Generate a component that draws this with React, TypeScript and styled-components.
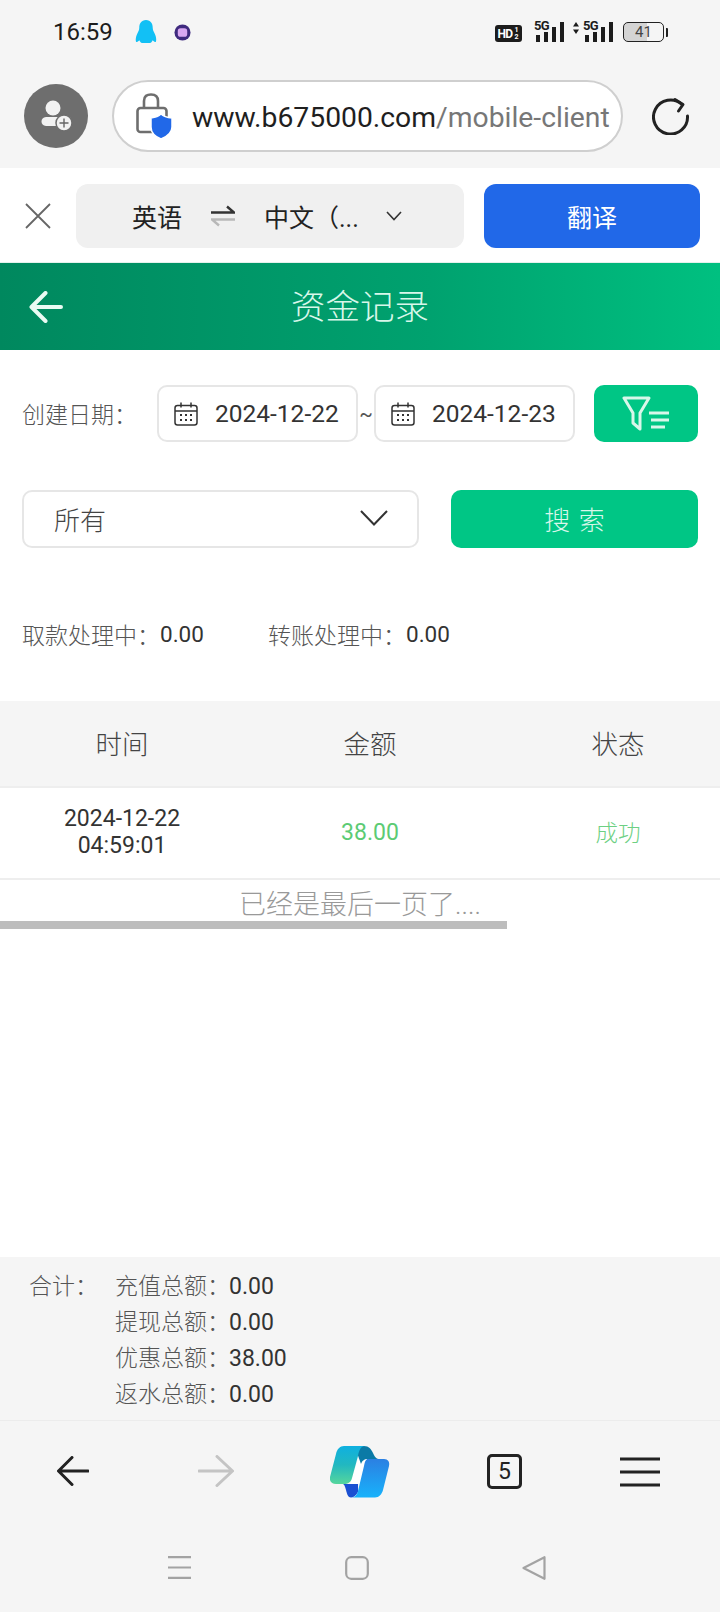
import React from "react";
import styled, { createGlobalStyle } from "styled-components";

const GlobalStyle = createGlobalStyle`
  html, body {
    margin: 0;
    padding: 0;
    background: #fff;
  }
  * {
    box-sizing: border-box;
  }
`;

const Page = styled.div`
  width: 720px;
  height: 1612px;
  display: flex;
  flex-direction: column;
  overflow: hidden;
  position: relative;
  background: #fff;
  color: #333;
  font-family: Roboto, "Noto Sans CJK SC", sans-serif;
`;

const BrowserTop = styled.div`
  height: 168px;
  background: #f5f5f5;
  flex: none;
`;

const StatusBar = styled.div`
  height: 64px;
  padding: 0 52px 0 53px;
  display: flex;
  align-items: center;
  color: #1c1c1c;
`;

const Clock = styled.span`
  font-size: 24px;
  width: 65px;
`;

const StatusLeft = styled.div`
  display: flex;
  align-items: center;
  gap: 17px;
  flex: 1;
`;

const StatusRight = styled.div`
  height: 20px;
  display: flex;
  align-items: flex-end;
`;

const HdBadge = styled.span`
  width: 27px;
  height: 17px;
  border-radius: 3px;
  background: #1c1c1c;
  color: #fff;
  font-size: 12px;
  font-weight: 700;
  display: flex;
  align-items: center;
  justify-content: center;
  letter-spacing: -0.6px;
  margin-right: 14px;
`;

const HdFraction = styled.span`
  font-size: 7px;
  line-height: 7px;
  width: 6px;
  margin-left: 1px;
  letter-spacing: 0;
  text-align: center;
`;

const Signal = styled.div<{ $gap: number }>`
  position: relative;
  width: 28px;
  height: 20px;
  margin-right: ${(p) => p.$gap}px;
  display: flex;
  align-items: flex-end;
  gap: 4px;
`;

const SignalLabel = styled.span`
  position: absolute;
  left: -2px;
  top: -2px;
  font-size: 13px;
  font-weight: 700;
  line-height: 12px;
  letter-spacing: -0.6px;
`;

const SignalBar = styled.span<{ $h: number }>`
  width: 4px;
  height: ${(p) => p.$h}px;
  background: #1c1c1c;
`;

const SignalArrows = styled.span`
  width: 6px;
  height: 20px;
  margin-right: 6px;
  display: flex;
`;

const Battery = styled.div`
  width: 41px;
  height: 20px;
  border: 1.5px solid #222;
  border-radius: 5px;
  display: flex;
  align-items: center;
  justify-content: center;
  font-size: 15px;
  color: #444;
  overflow: hidden;
  background: linear-gradient(90deg, #d4d4d4 60%, transparent 60%);
`;

const BatteryTip = styled.span`
  width: 2px;
  height: 9px;
  margin: 0 0 5px 2px;
  background: #222;
  border-radius: 0 1px 1px 0;
`;

const AddressRow = styled.div`
  display: flex;
  align-items: center;
  padding: 16px 0 0 24px;
`;

const Avatar = styled.div`
  width: 64px;
  height: 64px;
  border-radius: 50%;
  background: #6e6e6e;
  display: flex;
  align-items: center;
  justify-content: center;
  flex: none;
`;

const UrlPill = styled.div`
  width: 511px;
  height: 72px;
  margin-left: 24px;
  border: 2px solid #cfcfcf;
  border-radius: 36px;
  background: #fff;
  display: flex;
  align-items: center;
  padding-left: 22px;
  flex: none;
`;

const UrlText = styled.div`
  margin-left: 18px;
  padding-top: 2px;
  font-size: 28.3px;
  white-space: nowrap;
  color: #1f1f1f;
`;

const UrlPath = styled.span`
  color: #777;
`;

const ReloadButton = styled.div`
  margin-left: 29px;
  display: flex;
`;

const TranslateBar = styled.div`
  height: 95px;
  flex: none;
  background: #fff;
  display: flex;
  align-items: center;
  padding: 2px 20px 0 25px;
  border-bottom: 1px solid #e4f1ec;
`;

const LangChip = styled.div`
  width: 388px;
  height: 64px;
  margin-left: 25px;
  border-radius: 12px;
  background: #f0f0f0;
  display: flex;
  align-items: center;
  padding-left: 56px;
  font-size: 25px;
  color: #222;
`;

const SwapIcon = styled.div`
  margin: 0 29px;
  display: flex;
`;

const LangTarget = styled.span`
  width: 122px;
  white-space: nowrap;
`;

const TranslateButton = styled.div`
  width: 216px;
  height: 64px;
  margin-left: 20px;
  border-radius: 12px;
  background: #2168e8;
  color: #fff;
  font-size: 25px;
  display: flex;
  align-items: center;
  justify-content: center;
`;

const Header = styled.div`
  height: 87px;
  flex: none;
  padding-bottom: 5px;
  background: linear-gradient(90deg, #00885e 0%, #00a26f 60%, #00c080 100%);
  display: flex;
  align-items: center;
  justify-content: center;
  position: relative;
  color: #d8f7ea;
  font-size: 34.5px;
  font-weight: 300;
`;

const HeaderBack = styled.div`
  position: absolute;
  left: 29px;
  top: 28px;
  display: flex;
`;

const Filters = styled.div`
  padding: 35px 22px 0;
  display: flex;
  flex-direction: column;
  gap: 48px;
`;

const FilterRow = styled.div`
  display: flex;
  align-items: center;
`;

const DateLabel = styled.span`
  width: 135px;
  padding-bottom: 2px;
  font-size: 23px;
  font-weight: 300;
  color: #555;
`;

const DateInput = styled.div`
  width: 201px;
  height: 57px;
  border: 2px solid #e6e6e6;
  border-radius: 10px;
  display: flex;
  align-items: center;
  gap: 17px;
  padding-left: 15px;
  font-size: 24.5px;
  color: #333;
`;

const Tilde = styled.span`
  width: 16px;
  text-align: center;
  font-size: 20px;
  color: #555;
`;

const FilterButton = styled.div`
  width: 104px;
  height: 57px;
  margin-left: 19px;
  border-radius: 10px;
  background: #00c685;
  display: flex;
  align-items: center;
  justify-content: center;
`;

const SelectBox = styled.div`
  width: 397px;
  height: 58px;
  border: 2px solid #e6e6e6;
  border-radius: 10px;
  display: flex;
  align-items: center;
  justify-content: space-between;
  padding: 0 29px 2px 30px;
  font-size: 26px;
  font-weight: 300;
  color: #444;
`;

const SearchButton = styled.div`
  width: 247px;
  height: 58px;
  margin-left: 32px;
  padding-bottom: 1px;
  border-radius: 10px;
  background: #00c685;
  color: #d8f7ea;
  font-size: 26px;
  font-weight: 300;
  display: flex;
  align-items: center;
  justify-content: center;
  word-spacing: 2px;
`;

const Stats = styled.div`
  margin: 71px 0 52px;
  padding-left: 22px;
  height: 30px;
  display: flex;
  align-items: center;
  font-size: 22.5px;
`;

const StatItem = styled.div`
  width: 246px;
  display: flex;
  align-items: center;
`;

const StatLabel = styled.span`
  font-weight: 300;
  font-size: 23px;
  color: #555;
  width: 138px;
  white-space: nowrap;
`;

const TableWrap = styled.div`
  overflow: hidden;
  position: relative;
  flex: none;
`;

const TableRow = styled.div<{ $head?: boolean }>`
  width: 744px;
  margin-left: -2px;
  height: ${(p) => (p.$head ? 87 : 92)}px;
  display: grid;
  grid-template-columns: repeat(3, 248px);
  align-items: center;
  text-align: center;
  background: ${(p) => (p.$head ? "#f5f5f5" : "#fff")};
  border-bottom: 2px solid #eeeeee;
`;

const HeadCell = styled.div`
  font-size: 26.5px;
  font-weight: 300;
  padding-bottom: 2px;
  color: #444;
`;

const TimeCell = styled.div`
  font-size: 23px;
  line-height: 27px;
  padding-bottom: 2px;
  color: #333;
`;

const AmountCell = styled.div`
  font-size: 23px;
  padding-bottom: 2px;
  color: #5ccb74;
`;

const StatusCell = styled.div`
  font-size: 22.5px;
  font-weight: 300;
  padding-bottom: 5px;
  color: #6dd083;
`;

const LastPage = styled.div`
  height: 49px;
  padding-top: 9px;
  text-align: center;
  font-size: 27px;
  line-height: 32px;
  font-weight: 300;
  color: #999;
`;

const ScrollThumb = styled.div`
  position: absolute;
  left: 0;
  bottom: 0;
  width: 507px;
  height: 8px;
  background: #bdbdbd;
`;

const Spacer = styled.div`
  flex: 1;
`;

const Summary = styled.div`
  height: 163px;
  flex: none;
  background: #f5f5f5;
  padding: 12px 0 0 29px;
  display: flex;
  font-size: 23px;
`;

const SummaryTitle = styled.div`
  width: 86px;
  line-height: 36px;
  font-weight: 300;
  color: #555;
`;

const SummaryList = styled.div`
  display: flex;
  flex-direction: column;
`;

const SummaryLine = styled.div`
  height: 36px;
  line-height: 36px;
  display: flex;
  color: #333;
`;

const SummaryLabel = styled.span`
  width: 114px;
  flex: none;
  white-space: nowrap;
  font-weight: 300;
  color: #555;
`;

const BottomBar = styled.div`
  height: 192px;
  flex: none;
  background: #f5f5f5;
  border-top: 1px solid #ececec;
  display: flex;
  flex-direction: column;
`;

const BrowserNav = styled.div`
  height: 108px;
  padding: 25px 0 0 57px;
  display: flex;
  align-items: flex-start;
`;

const NavSlot = styled.div<{ $w: number; $top: number }>`
  width: ${(p) => p.$w}px;
  padding-top: ${(p) => p.$top}px;
  display: flex;
  flex: none;
`;

const TabCount = styled.div`
  width: 35px;
  height: 35px;
  border: 3px solid #222;
  border-radius: 5px;
  display: flex;
  align-items: center;
  justify-content: center;
  font-size: 23px;
  color: #222;
`;

const SystemNav = styled.div`
  padding: 27px 0 0 168px;
  display: flex;
  align-items: flex-start;
`;

const Penguin = () => (
  <svg width="22" height="24" viewBox="0 0 22 25">
    <path
      d="M11 0C6 0 4 4 4 8C4 10 3 12 2 14C0 18 0 22 1 23C2 23 3 22 4 21C5 23 6 24 8 24H14C16 24 17 23 18 21C19 22 20 23 21 23C22 22 22 18 20 14C19 12 18 10 18 8C18 4 16 0 11 0Z"
      fill="#12c0f5"
    />
  </svg>
);

const AppDot = () => (
  <svg width="17" height="17" viewBox="0 0 18 18">
    <circle cx="9" cy="9" r="8.5" fill="#3f2a7e" />
    <rect x="4" y="4.5" width="10" height="9" rx="3" fill="#d9a8f2" />
  </svg>
);

const ArrowsIcon = () => (
  <svg width="6" height="12" viewBox="0 0 6 12" fill="#1c1c1c">
    <path d="M3 0L6 4.5H0ZM3 12L0 7.5H6Z" />
  </svg>
);

const AddPersonIcon = () => (
  <svg width="36" height="36" viewBox="0 0 36 36">
    <circle cx="15" cy="10" r="7.5" fill="#f2f2f2" />
    <path d="M8 19H21C24 19 24 28 21 28H8C2 28 2 19 8 19Z" fill="#f2f2f2" />
    <circle cx="26" cy="25" r="8" fill="#f2f2f2" stroke="#6e6e6e" strokeWidth="1.5" />
    <path d="M26 20.5V29.5M21.5 25H30.5" stroke="#666" strokeWidth="1.4" />
  </svg>
);

const LockShieldIcon = () => (
  <svg width="38" height="46" viewBox="0 0 38 46">
    <path
      d="M8 15V8C8 3 11 1.5 15 1.5C19 1.5 22 3 22 8V15"
      fill="none"
      stroke="#6e6e6e"
      strokeWidth="2.6"
    />
    <rect x="1.5" y="15" width="29" height="24" rx="3" fill="none" stroke="#6e6e6e" strokeWidth="2.6" />
    <path
      d="M25 21C28 24 31 24.5 36 25V34C36 40 30 44 25 46C20 44 15 40 15 34V25C19 24.5 22 24 25 21Z"
      fill="#2168e8"
      stroke="#fff"
      strokeWidth="1.5"
    />
  </svg>
);

const ReloadIcon = () => (
  <svg width="38" height="38" viewBox="0 0 38 38" fill="none" stroke="#222" strokeWidth="3" strokeLinecap="round">
    <path d="M30 7.5A17 17 0 1 0 35.5 19" />
    <path d="M23 2.5L31 7.5L26.5 14" strokeLinejoin="round" />
  </svg>
);

const CloseIcon = () => (
  <svg width="26" height="26" viewBox="0 0 26 26" stroke="#666" strokeWidth="1.8">
    <path d="M1 1L25 25M25 1L1 25" />
  </svg>
);

const SwapArrows = () => (
  <svg width="24" height="22" viewBox="0 0 24 22" fill="none" strokeWidth="2.4">
    <path d="M0 7.5H23L16 1.5" stroke="#333" />
    <path d="M24 14.5H1L8 20.5" stroke="#b8b8b8" />
  </svg>
);

const SmallChevron = () => (
  <svg width="16" height="10" viewBox="0 0 16 10" fill="none" stroke="#333" strokeWidth="1.6">
    <path d="M1 1L8 8.5L15 1" />
  </svg>
);

const BackArrow = () => (
  <svg width="34" height="32" viewBox="0 0 34 32" fill="none" stroke="#e9fbf3" strokeWidth="4" strokeLinecap="round" strokeLinejoin="round">
    <path d="M16.5 2L2.5 16L16.5 30M3 16H32" />
  </svg>
);

const CalendarIcon = () => (
  <svg width="24" height="24" viewBox="0 0 24 24" fill="none" stroke="#333" strokeWidth="1.5">
    <rect x="1" y="3.5" width="22" height="19.5" rx="2.5" />
    <path d="M1 9H23M7 0.5V5.5M17 0.5V5.5" />
    <path d="M6 13H8M11 13H13M16 13H18M6 18H8M11 18H13M16 18H18" strokeWidth="1.8" />
  </svg>
);

const FilterIcon = () => (
  <svg width="48" height="36" viewBox="0 0 48 36" fill="none" stroke="#d8f7ea" strokeWidth="3">
    <path d="M2 2H27L18 17V33L11 27V17Z" strokeLinejoin="round" />
    <path d="M27 17H47M29 24H47M29 31H43" />
  </svg>
);

const BigChevron = () => (
  <svg width="28" height="16" viewBox="0 0 28 16" fill="none" stroke="#333" strokeWidth="2">
    <path d="M1 1L14 14.5L27 1" />
  </svg>
);

const LeftArrow = () => (
  <svg width="32" height="30" viewBox="0 0 32 30" fill="none" stroke="#222" strokeWidth="3" strokeLinecap="round" strokeLinejoin="round">
    <path d="M15 1.5L1.5 15L15 28.5M2 15H31" />
  </svg>
);

const RightArrow = () => (
  <svg width="36" height="32" viewBox="0 0 36 32" fill="none" stroke="#c4c4c4" strokeWidth="3" strokeLinecap="round" strokeLinejoin="round">
    <path d="M19 1.5L34.5 16L19 30.5M1 16H34" />
  </svg>
);

const CopilotLogo = () => (
  <svg width="60" height="52" viewBox="30 16 60 52">
    <defs>
      <linearGradient id="copilotLeft" x1="0" y1="0" x2="0" y2="1">
        <stop offset="0" stopColor="#0fb0e0" />
        <stop offset="0.5" stopColor="#22b8c0" />
        <stop offset="1" stopColor="#56d69c" />
      </linearGradient>
      <linearGradient id="copilotRight" x1="0" y1="0" x2="0" y2="1">
        <stop offset="0" stopColor="#2b80e2" />
        <stop offset="1" stopColor="#18b2fb" />
      </linearGradient>
    </defs>
    <path d="M58 29H68L60 54H50Z" fill="#fff" />
    <path d="M58 16H64C69 16 71 19 73 23C75 27 76 29 80 29H68C64 29 62 31 61 34L56 20Z" fill="#0b7aa6" />
    <path
      d="M44 16H65C61 16 59 20 58 26L52 48C51 52 48 54 44 54H36C32 54 29 51 30 47L36 24C37 19 40 16 44 16Z"
      fill="url(#copilotLeft)"
    />
    <path d="M43 54H58V62C56 66 53 67.5 51 67.5C48 67.5 47 64 46 60C45 56 44 54 43 54Z" fill="#1b50d2" />
    <path
      d="M68 29H84C88 29 90 32 89 36L83 60C82 64 79 67.5 75 67.5H51C55 67.5 57 65 58 61L64 36C65 31 66 29 68 29Z"
      fill="url(#copilotRight)"
    />
  </svg>
);

const MenuIcon = () => (
  <svg width="40" height="30" viewBox="0 0 40 30" stroke="#222" strokeWidth="3.2">
    <path d="M0 2H40M0 15H40M0 28H40" />
  </svg>
);

const SysMenuIcon = () => (
  <svg width="23" height="23" viewBox="0 0 23 23" stroke="#a3a3a3" strokeWidth="2.2">
    <path d="M0 1.2H23M0 11.5H23M0 21.8H23" />
  </svg>
);

const SysHomeIcon = () => (
  <svg width="24" height="24" viewBox="0 0 24 24" fill="none" stroke="#a3a3a3" strokeWidth="2.2">
    <rect x="1.2" y="1.2" width="21.6" height="21.6" rx="5" />
  </svg>
);

const SysBackIcon = () => (
  <svg width="24" height="24" viewBox="0 0 24 24" fill="none" stroke="#a3a3a3" strokeWidth="2.2" strokeLinejoin="round">
    <path d="M1.5 12L22.5 1.2V22.8Z" />
  </svg>
);

const SignalBars = () => (
  <>
    <SignalLabel>5G</SignalLabel>
    <SignalBar $h={7} />
    <SignalBar $h={10} />
    <SignalBar $h={15} />
    <SignalBar $h={20} />
  </>
);

const summaryLines = [
  ["充值总额：", "0.00"],
  ["提现总额：", "0.00"],
  ["优惠总额：", "38.00"],
  ["返水总额：", "0.00"],
];

export default function App() {
  return (
    <Page>
      <GlobalStyle />
      <BrowserTop>
        <StatusBar>
          <StatusLeft>
            <Clock>16:59</Clock>
            <Penguin />
            <AppDot />
          </StatusLeft>
          <StatusRight>
            <HdBadge>
              HD<HdFraction>1<br />2</HdFraction>
            </HdBadge>
            <Signal $gap={9}>
              <SignalBars />
            </Signal>
            <SignalArrows>
              <ArrowsIcon />
            </SignalArrows>
            <Signal $gap={10}>
              <SignalBars />
            </Signal>
            <Battery>41</Battery>
            <BatteryTip />
          </StatusRight>
        </StatusBar>
        <AddressRow>
          <Avatar>
            <AddPersonIcon />
          </Avatar>
          <UrlPill>
            <LockShieldIcon />
            <UrlText>
              www.b675000.com<UrlPath>/mobile-client</UrlPath>
            </UrlText>
          </UrlPill>
          <ReloadButton>
            <ReloadIcon />
          </ReloadButton>
        </AddressRow>
      </BrowserTop>

      <TranslateBar>
        <CloseIcon />
        <LangChip>
          <span>英语</span>
          <SwapIcon>
            <SwapArrows />
          </SwapIcon>
          <LangTarget>中文（...</LangTarget>
          <SmallChevron />
        </LangChip>
        <TranslateButton>翻译</TranslateButton>
      </TranslateBar>

      <Header>
        <HeaderBack>
          <BackArrow />
        </HeaderBack>
        资金记录
      </Header>

      <Filters>
        <FilterRow>
          <DateLabel>创建日期：</DateLabel>
          <DateInput>
            <CalendarIcon />
            2024-12-22
          </DateInput>
          <Tilde>~</Tilde>
          <DateInput>
            <CalendarIcon />
            2024-12-23
          </DateInput>
          <FilterButton>
            <FilterIcon />
          </FilterButton>
        </FilterRow>
        <FilterRow>
          <SelectBox>
            所有
            <BigChevron />
          </SelectBox>
          <SearchButton>搜 索</SearchButton>
        </FilterRow>
      </Filters>

      <Stats>
        <StatItem>
          <StatLabel>取款处理中：</StatLabel>
          0.00
        </StatItem>
        <StatItem>
          <StatLabel>转账处理中：</StatLabel>
          0.00
        </StatItem>
      </Stats>

      <TableWrap>
        <TableRow $head>
          <HeadCell>时间</HeadCell>
          <HeadCell>金额</HeadCell>
          <HeadCell>状态</HeadCell>
        </TableRow>
        <TableRow>
          <TimeCell>
            2024-12-22
            <br />
            04:59:01
          </TimeCell>
          <AmountCell>38.00</AmountCell>
          <StatusCell>成功</StatusCell>
        </TableRow>
        <LastPage>已经是最后一页了....</LastPage>
        <ScrollThumb />
      </TableWrap>

      <Spacer />

      <Summary>
        <SummaryTitle>合计：</SummaryTitle>
        <SummaryList>
          {summaryLines.map(([label, value]) => (
            <SummaryLine key={label}>
              <SummaryLabel>{label}</SummaryLabel>
              {value}
            </SummaryLine>
          ))}
        </SummaryList>
      </Summary>

      <BottomBar>
        <BrowserNav>
          <NavSlot $w={141} $top={10}>
            <LeftArrow />
          </NavSlot>
          <NavSlot $w={132} $top={9}>
            <RightArrow />
          </NavSlot>
          <NavSlot $w={157} $top={0}>
            <CopilotLogo />
          </NavSlot>
          <NavSlot $w={133} $top={8}>
            <TabCount>5</TabCount>
          </NavSlot>
          <NavSlot $w={40} $top={11}>
            <MenuIcon />
          </NavSlot>
        </BrowserNav>
        <SystemNav>
          <NavSlot $w={177} $top={0}>
            <SysMenuIcon />
          </NavSlot>
          <NavSlot $w={177} $top={0}>
            <SysHomeIcon />
          </NavSlot>
          <NavSlot $w={24} $top={0}>
            <SysBackIcon />
          </NavSlot>
        </SystemNav>
      </BottomBar>
    </Page>
  );
}
